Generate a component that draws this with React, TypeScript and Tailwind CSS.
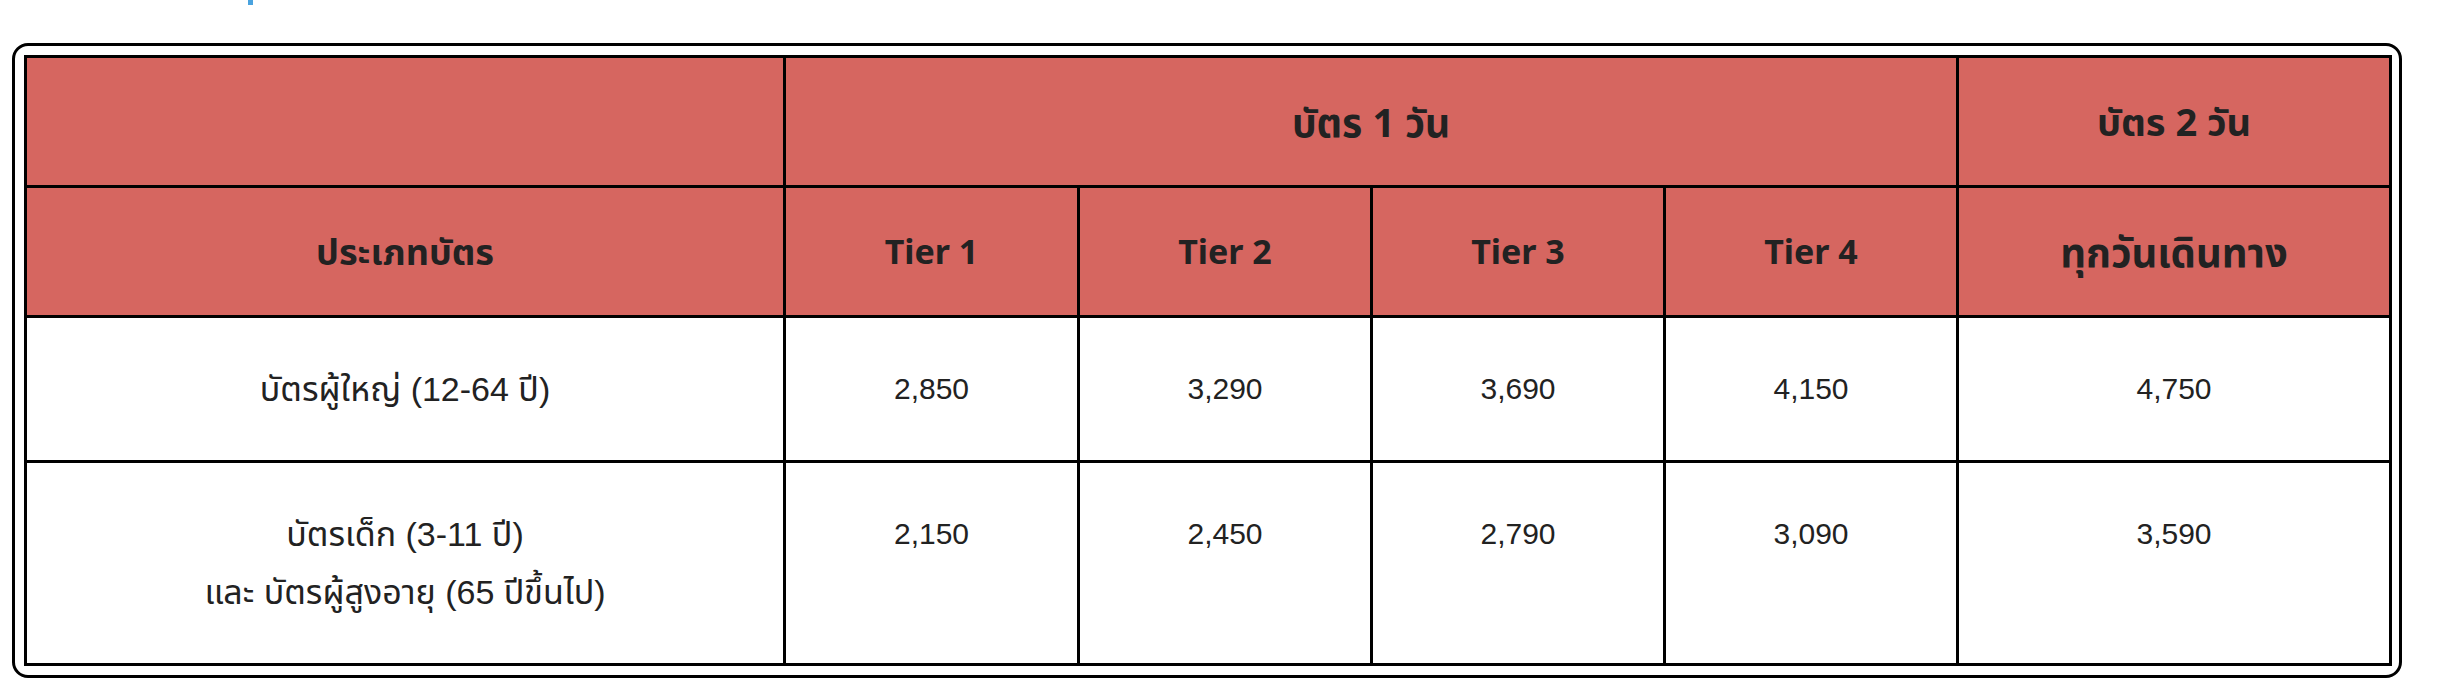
import React from "react";

interface PriceRow {
  label: string[];
  prices: string[];
}

const rows: PriceRow[] = [
  { label: ["บัตรผู้ใหญ่ (12-64 ปี)"], prices: ["2,850", "3,290", "3,690", "4,150", "4,750"] },
  {
    label: ["บัตรเด็ก (3-11 ปี)", "และ บัตรผู้สูงอายุ (65 ปีขึ้นไป)"],
    prices: ["2,150", "2,450", "2,790", "3,090", "3,590"],
  },
];

const head =
  "border-[3px] border-black bg-[#d66660] text-center align-middle py-[41px] leading-[45px] font-bold text-[#222]";
const body =
  "border-[3px] border-black bg-white text-center align-top pt-[42px] pb-[42px] leading-[58px] text-[#222]";

const App: React.FC = () => {
  return (
    <div className="w-[2446px] h-[692px] bg-white font-['Liberation_Sans','Noto_Sans_Thai',sans-serif]">
      {/* cut-off heading above the table */}
      <div className="h-[43px]">
        <div className="ml-[248px] w-[5px] h-[5px] bg-[#4aa3df]" />
      </div>

      <div className="ml-[12px] w-[2390px] h-[635px] border-[3px] border-black rounded-[16px] p-[9px] pb-0">
        <table className="w-[2368px] table-fixed border-collapse">
          <colgroup>
            <col className="w-[759px]" />
            <col className="w-[294px]" />
            <col className="w-[293px]" />
            <col className="w-[293px]" />
            <col className="w-[293px]" />
            <col />
          </colgroup>
          <thead className="font-['Noto_Sans','Noto_Sans_Thai',sans-serif]">
            <tr>
              <th className={head}></th>
              <th className={`${head} text-[39px]`} colSpan={4}>
                บัตร 1 วัน
              </th>
              <th className={`${head} text-[38px]`}>บัตร 2 วัน</th>
            </tr>
            <tr>
              <th className={`${head} text-[36px]`}>ประเภทบัตร</th>
              <th className={`${head} text-[34px]`}>Tier 1</th>
              <th className={`${head} text-[34px]`}>Tier 2</th>
              <th className={`${head} text-[34px]`}>Tier 3</th>
              <th className={`${head} text-[34px]`}>Tier 4</th>
              <th className={`${head} text-[40px]`}>ทุกวันเดินทาง</th>
            </tr>
          </thead>
          <tbody>
            {rows.map((row) => (
              <tr key={row.label[0]}>
                <td className={`${body} text-[34px]`}>
                  {row.label.map((line) => (
                    <div key={line}>{line}</div>
                  ))}
                </td>
                {row.prices.map((p, i) => (
                  <td key={i} className={`${body} text-[30px]`}>
                    {p}
                  </td>
                ))}
              </tr>
            ))}
          </tbody>
        </table>
      </div>
    </div>
  );
};

export default App;
